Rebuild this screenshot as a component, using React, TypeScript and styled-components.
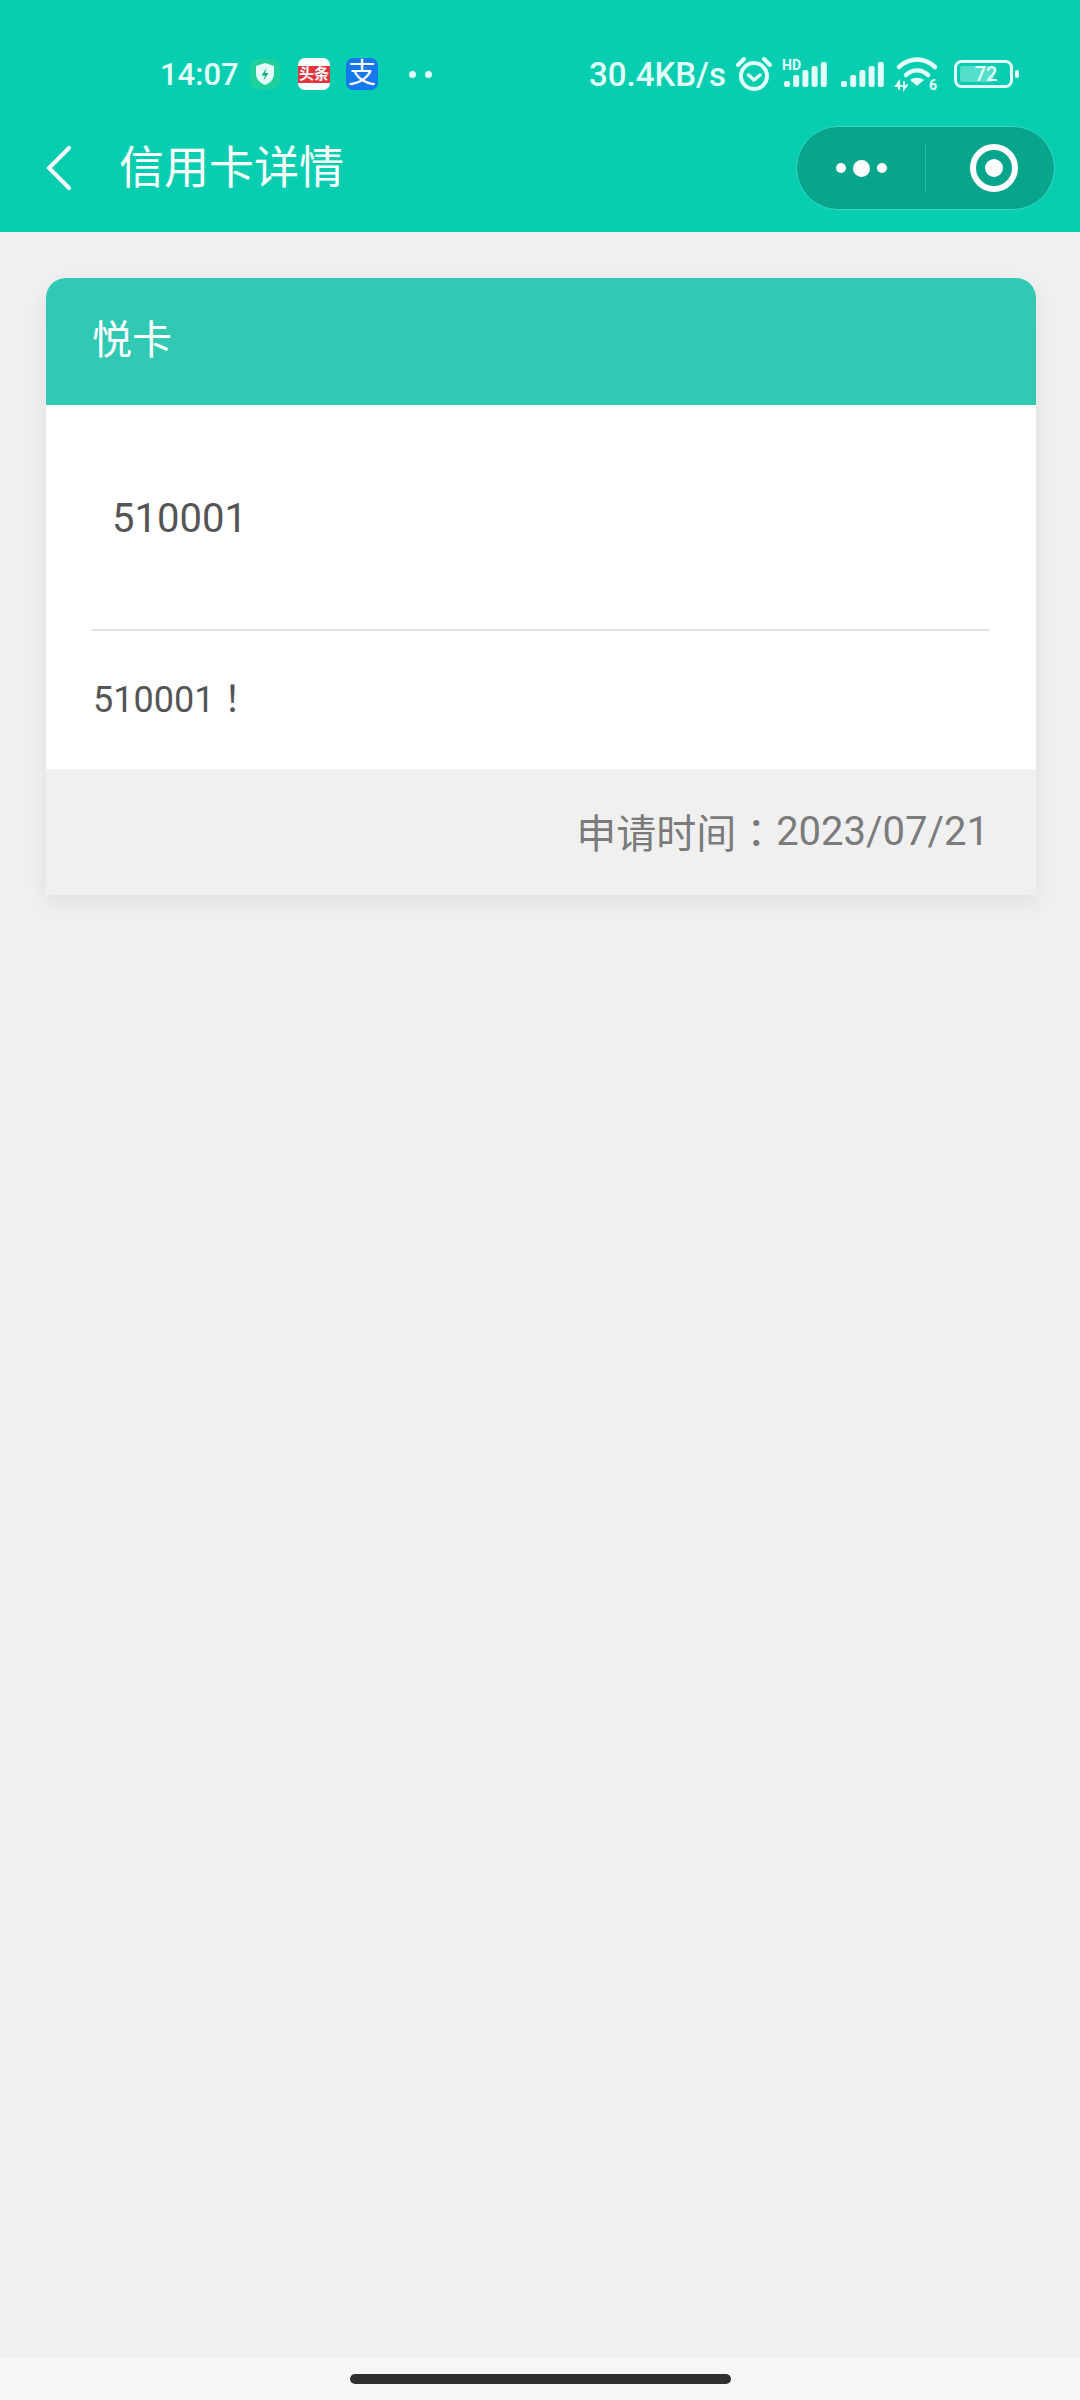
import styled, { createGlobalStyle } from 'styled-components';

const sansStack = `Roboto, "Noto Sans CJK SC", sans-serif`;
const statusInk = '#e2fffa';

const GlobalStyle = createGlobalStyle`
  html, body {
    margin: 0;
    padding: 0;
    background: #f0f0f0;
  }
  * {
    box-sizing: border-box;
  }
`;

const Page = styled.div`
  width: 1080px;
  height: 2400px;
  display: flex;
  flex-direction: column;
  background: #f0f0f0;
  font-family: ${sansStack};
`;

const Header = styled.header`
  flex: none;
  height: 232px;
  display: flex;
  flex-direction: column;
  background: #07ceb0;
`;

const StatusBar = styled.div`
  height: 126px;
  padding: 48px 60px 26px 160px;
  display: flex;
  align-items: center;
  justify-content: space-between;
  color: ${statusInk};
`;

const StatusGroup = styled.div`
  display: flex;
  align-items: center;
`;

const Time = styled.span`
  width: 81px;
  font-size: 31px;
  font-weight: 500;
  white-space: nowrap;
`;

const Speed = styled.span`
  width: 137px;
  font-size: 33px;
  font-weight: 500;
  white-space: nowrap;
`;

const ShieldBadge = styled.div`
  width: 30px;
  height: 30px;
  margin: 0 18px 0 9px;
  border-radius: 8px;
  background: #1fd09d;
  display: flex;
  align-items: center;
  justify-content: center;
`;

const NewsBadge = styled.div`
  width: 32px;
  height: 32px;
  margin-right: 16px;
  border-radius: 7px;
  background: #fff;
  display: flex;
  align-items: center;
`;

const NewsStrip = styled.span`
  width: 100%;
  height: 17px;
  background: #e4353c;
  color: #fff;
  font-size: 15px;
  line-height: 17px;
  font-weight: 700;
  text-align: center;
  white-space: nowrap;
`;

const PayBadge = styled.div`
  width: 32px;
  height: 32px;
  margin-right: 31px;
  border-radius: 7px;
  background: #1677ee;
  color: #fff;
  font-size: 28px;
  line-height: 31px;
  text-align: center;
`;

const StatusDots = styled.div`
  display: flex;
  gap: 9px;
`;

const StatusDot = styled.span`
  width: 7px;
  height: 7px;
  border-radius: 50%;
  background: ${statusInk};
`;

const IconGap = styled.span<{ $w: number }>`
  flex: none;
  width: ${(p) => p.$w}px;
`;

const NavBar = styled.div`
  height: 84px;
  padding: 0 25px 0 46px;
  display: flex;
  align-items: center;
  justify-content: space-between;
`;

const NavLead = styled.div`
  display: flex;
  align-items: center;
  gap: 48px;
`;

const Title = styled.h1`
  margin: 2px 0 0 -1px;
  color: #fff;
  font-size: 45px;
  line-height: 60px;
  font-weight: 400;
  white-space: nowrap;
`;

const Capsule = styled.div`
  width: 259px;
  height: 84px;
  display: flex;
  align-items: center;
  border-radius: 42px;
  border: 1px solid #34d6bd;
  background: #08a58d;
`;

const CapsuleSide = styled.div`
  flex: 1;
  display: flex;
  align-items: center;
  justify-content: center;
  gap: 7px;
`;

const CapsuleRule = styled.span`
  flex: none;
  width: 1px;
  height: 50px;
  background: #2cbaa4;
`;

const MoreDot = styled.span<{ $big?: boolean }>`
  width: ${(p) => (p.$big ? 17 : 10)}px;
  height: ${(p) => (p.$big ? 17 : 10)}px;
  border-radius: 50%;
  background: #fff;
`;

const RecordRing = styled.div`
  width: 48px;
  height: 48px;
  margin-left: 8px;
  border: 6px solid #fff;
  border-radius: 50%;
  display: flex;
  align-items: center;
  justify-content: center;
`;

const RecordDot = styled.span`
  width: 18px;
  height: 18px;
  border-radius: 50%;
  background: #fff;
`;

const Main = styled.main`
  flex: 1;
  padding: 46px 44px 0 46px;
`;

const Card = styled.section`
  border-radius: 20px 20px 0 0;
  overflow: hidden;
  background: #fff;
  box-shadow: 0 8px 24px rgba(0, 0, 0, 0.07);
`;

const CardHead = styled.div`
  height: 127px;
  padding: 0 0 10px 46px;
  display: flex;
  align-items: center;
  background: #31c9b3;
  color: #fff;
  font-size: 40px;
`;

const CardBody = styled.div`
  padding: 0 47px 0 46px;
  color: #555;
`;

const CardValue = styled.div`
  height: 226px;
  padding: 80px 0 0 20px;
  border-bottom: 2px solid #e2e2e2;
  font-size: 40px;
  line-height: 68px;
`;

const CardNote = styled.div`
  height: 138px;
  padding: 37px 0 0 1px;
  font-size: 36px;
  line-height: 56px;
`;

const CardFoot = styled.div`
  height: 126px;
  padding: 0 47px 2px 0;
  display: flex;
  align-items: center;
  justify-content: flex-end;
  background: #f0f0f0;
  color: #7b7b7b;
  font-size: 40px;
`;

// the phone draws full-width punctuation centred in its box, the TC face does the same
const Punct = styled.span`
  font-family: "Noto Sans CJK TC", sans-serif;
`;

const HomeArea = styled.div`
  flex: none;
  height: 42px;
  padding-top: 16px;
  background: #f7f7f7;
  display: flex;
  justify-content: center;
`;

const HomeBar = styled.span`
  width: 381px;
  height: 10px;
  border-radius: 5px;
  background: #2f2f2f;
`;

function SignalBars({ hd }: { hd?: boolean }) {
  return (
    <svg width="47" height="40" viewBox="0 0 47 40" fill={statusInk}>
      <rect x="2" y="27" width="6" height="6" rx="2" />
      <rect x="11.2" y="21" width="6" height="12" rx="2" />
      <rect x="20.4" y="16" width="6" height="17" rx="2" />
      <rect x="29.6" y="12" width="6" height="21" rx="2" />
      <rect x="38.8" y="8" width="6" height="25" rx="2" />
      {hd && (
        <text x="0" y="16" fontSize="14" fontWeight="700" fontFamily="Roboto, sans-serif">
          HD
        </text>
      )}
    </svg>
  );
}

function AlarmIcon() {
  return (
    <svg width="40" height="40" viewBox="0 0 40 40" fill="none" stroke={statusInk} strokeWidth="4" strokeLinecap="round" style={{ marginLeft: 7 }}>
      <circle cx="21" cy="22" r="13" />
      <path d="M15.5 21l5.5 5 6-5" strokeWidth="3.5" strokeLinejoin="round" />
      <path d="M5 11l6-6M37 11l-6-6" />
    </svg>
  );
}

function WifiIcon() {
  return (
    <svg width="46" height="40" viewBox="0 0 46 40" fill="none" stroke={statusInk} strokeWidth="4.5" strokeLinecap="round">
      <path d="M5 13c11-10 25-10 36 0" />
      <path d="M12 21c7-6 15-6 22 0" />
      <path d="M23 32l-7-6c4-3 10-3 14 0z" fill={statusInk} stroke="none" />
      <path d="M5 35v-7l-3 4h6M10 28v7l3-4" strokeWidth="2" />
      <text x="35" y="36" fontSize="14" fontWeight="700" stroke="none" fill={statusInk} fontFamily="Roboto, sans-serif">
        6
      </text>
    </svg>
  );
}

function BatteryIcon() {
  return (
    <svg width="68" height="30" viewBox="0 0 68 30" fill="none">
      <rect x="3.5" y="2.5" width="56" height="25" rx="6" stroke={statusInk} strokeWidth="3" />
      <rect x="8" y="7" width="34" height="16" rx="2" fill={statusInk} opacity="0.35" />
      <rect x="63" y="11" width="4" height="8" rx="2" fill={statusInk} />
      <text x="34" y="22" fontSize="20" fontWeight="500" textAnchor="middle" fill={statusInk} fontFamily="Roboto, sans-serif">
        72
      </text>
    </svg>
  );
}

function App() {
  return (
    <Page>
      <GlobalStyle />
      <Header>
        <StatusBar>
          <StatusGroup>
            <Time>14:07</Time>
            <ShieldBadge>
              <svg width="20" height="24" viewBox="0 0 20 24">
                <path d="M10 1l9 3v8c0 5-4 9-9 11-5-2-9-6-9-11V4z" fill="#e3fff7" />
                <path d="M11.5 6l-5 7.5h3.5l-1.500 5 5-7.500h-3.500z" fill="#12a77f" />
              </svg>
            </ShieldBadge>
            <NewsBadge>
              <NewsStrip>头条</NewsStrip>
            </NewsBadge>
            <PayBadge>支</PayBadge>
            <StatusDots>
              <StatusDot />
              <StatusDot />
            </StatusDots>
          </StatusGroup>
          <StatusGroup>
            <Speed>30.4KB/s</Speed>
            <AlarmIcon />
            <IconGap $w={9} />
            <SignalBars hd />
            <IconGap $w={10} />
            <SignalBars />
            <IconGap $w={8} />
            <WifiIcon />
            <IconGap $w={12} />
            <BatteryIcon />
          </StatusGroup>
        </StatusBar>
        <NavBar>
          <NavLead>
            <svg width="26" height="44" viewBox="0 0 26 44" fill="none" stroke="#fff" strokeWidth="4" strokeLinecap="round">
              <path d="M23 2L3 22l20 20" />
            </svg>
            <Title>信用卡详情</Title>
          </NavLead>
          <Capsule>
            <CapsuleSide>
              <MoreDot />
              <MoreDot $big />
              <MoreDot />
            </CapsuleSide>
            <CapsuleRule />
            <CapsuleSide>
              <RecordRing>
                <RecordDot />
              </RecordRing>
            </CapsuleSide>
          </Capsule>
        </NavBar>
      </Header>
      <Main>
        <Card>
          <CardHead>悦卡</CardHead>
          <CardBody>
            <CardValue>510001</CardValue>
            <CardNote>
              510001<Punct>！</Punct>
            </CardNote>
          </CardBody>
          <CardFoot>
            申请时间<Punct>：</Punct>2023/07/21
          </CardFoot>
        </Card>
      </Main>
      <HomeArea>
        <HomeBar />
      </HomeArea>
    </Page>
  );
}

export default App;
